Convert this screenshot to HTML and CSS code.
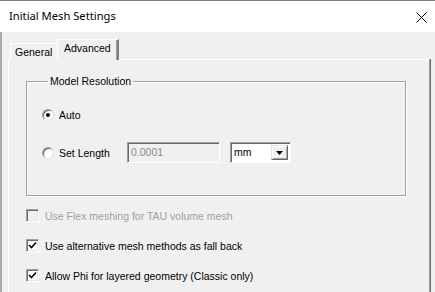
FILE: index.html
```html
<!DOCTYPE html>
<html>
<head>
<meta charset="utf-8">
<link rel="stylesheet" href="styles.css">
</head>
<body>
<div class="window">
  <div class="titlebar">
    <span class="title">Initial Mesh Settings</span>
    <svg class="close" width="11" height="11" viewBox="0 0 11 11"><path d="M0.5 0.5 L10.5 10.5 M10.5 0.5 L0.5 10.5" stroke="#000" stroke-width="1" fill="none"/></svg>
  </div>
  <div class="client">
    <div class="tabs">
      <div class="tab">General</div>
      <div class="tab active">Advanced</div>
    </div>
    <div class="panel">
      <fieldset class="group">
        <legend>Model Resolution</legend>
        <div class="row row-auto">
          <span class="radio checked"></span>
          <span class="label">Auto</span>
        </div>
        <div class="row row-len">
          <span class="radio"></span>
          <span class="label lenlabel">Set Length</span>
          <span class="field">0.0001</span>
          <span class="combo"><span class="combo-text">mm</span><span class="combo-btn"><svg width="7" height="4" viewBox="0 0 7 4"><path d="M0 0 H7 L3.5 4 Z" fill="#000"/></svg></span></span>
        </div>
      </fieldset>
      <div class="checks">
        <div class="check-row disabled"><span class="box"></span><span class="label">Use Flex meshing for TAU volume mesh</span></div>
        <div class="check-row"><span class="box"><svg width="9" height="9" viewBox="0 0 9 9"><path d="M1 4 L3.5 6.5 L8 1.5" stroke="#000" stroke-width="1.6" fill="none"/></svg></span><span class="label">Use alternative mesh methods as fall back</span></div>
        <div class="check-row"><span class="box"><svg width="9" height="9" viewBox="0 0 9 9"><path d="M1 4 L3.5 6.5 L8 1.5" stroke="#000" stroke-width="1.6" fill="none"/></svg></span><span class="label">Allow Phi for layered geometry (Classic only)</span></div>
      </div>
    </div>
  </div>
</div>
</body>
</html>
```
FILE: styles.css
```css
* { box-sizing: border-box; }
html, body { margin: 0; padding: 0; }
body {
  width: 435px;
  height: 292px;
  overflow: hidden;
  background: #f0f0f0;
  font-family: "Liberation Sans", Arial, sans-serif;
  font-size: 10.5px;
  color: #000;
}
.window { width: 435px; height: 292px; display: flex; flex-direction: column; }
.titlebar {
  height: 32px;
  flex: none;
  background: #fff;
  border-top: 1px solid #7a7a7a;
  display: flex;
  align-items: center;
  padding-left: 9px;
  padding-right: 8px;
}
.title {
  font-family: "Noto Sans", "Liberation Sans", sans-serif;
  font-size: 11.2px;
  color: #000;
  flex: 1;
  margin-top: -2px;
}
.close { margin-top: 1px; margin-right: 0; }
.client {
  flex: 1;
  border-left: 2px solid #a8a8a8;
  padding: 7px 4px 0 6px;
  display: flex;
  flex-direction: column;
}
.tabs {
  display: flex;
  align-items: flex-end;
  padding-left: 2px;
  position: relative;
  z-index: 1;
  margin-bottom: -1px;
}
.tab {
  height: 17px;
  padding: 0 4px;
  width: 47px;
  line-height: 15px;
  padding-top: 1px;
  border-top: 1px solid #fff;
  border-left: 1px solid #fff;
  background: #f0f0f0;
}
.tab.active {
  height: 21px;
  width: 62px;
  padding-left: 6px;
  line-height: 14px;
  border-right: 2px solid;
  border-right-color: #808080;
  box-shadow: inset -1px 0 0 #a0a0a0;
}
.panel {
  flex: 1;
  border-top: 1px solid #fff;
  border-left: 1px solid #fff;
  border-right: 1px solid #a0a0a0;
  box-shadow: 1px 0 0 #696969;
  padding: 0 0 0 17px;
  margin-right: 0;
  width: 422px;
}
.group {
  margin: 15px 0 0 0;
  width: 380px;
  height: 121px;
  border: 1px solid #a0a0a0;
  box-shadow: 1px 1px 0 #fff, inset 1px 1px 0 #fff;
  padding: 0 0 0 15px;
}
.group legend {
  padding: 0 2px;
  margin-left: 6px;
  line-height: 13px;
}
.row { display: flex; align-items: center; }
.row-auto { margin-top: 20px; height: 14px; }
.row-len { margin-top: 20px; height: 21px; }
.label { margin-left: 5px; }
.lenlabel { width: 68px; }
.radio {
  width: 12px;
  height: 12px;
  flex: none;
  border-radius: 50%;
  background: #fff;
  border: 1px solid;
  border-color: #a0a0a0 #e3e3e3 #e3e3e3 #a0a0a0;
  box-shadow: inset 1px 1px 0 #696969;
  display: flex;
  align-items: center;
  justify-content: center;
}
.radio.checked::after {
  content: "";
  width: 4px;
  height: 4px;
  border-radius: 50%;
  background: #000;
}
.field {
  width: 93px;
  height: 21px;
  border: 1px solid;
  border-color: #a0a0a0 #fff #fff #a0a0a0;
  box-shadow: inset 1px 1px 0 #696969;
  background: #f0f0f0;
  color: #8a8a8a;
  padding: 2px 0 0 3px;
  line-height: 14px;
}
.combo {
  margin-left: 10px;
  width: 61px;
  height: 21px;
  border: 1px solid;
  border-color: #a0a0a0 #fff #fff #a0a0a0;
  box-shadow: inset 1px 1px 0 #696969;
  background: #fff;
  display: flex;
  align-items: stretch;
  padding: 2px 2px 2px 2px;
}
.combo-text { flex: 1; padding-left: 1px; line-height: 15px; color: #000; }
.combo-btn {
  width: 17px;
  background: #f0f0f0;
  border: 1px solid;
  border-color: #e3e3e3 #696969 #696969 #e3e3e3;
  box-shadow: inset 1px 1px 0 #fff, inset -1px -1px 0 #a0a0a0;
  display: flex;
  align-items: center;
  justify-content: center;
}
.checks { display: flex; flex-direction: column; gap: 17px; margin-top: 13px; padding-left: 0; }
.check-row { display: flex; align-items: center; height: 13px; }
.box {
  width: 13px;
  height: 13px;
  flex: none;
  background: #fff;
  border: 1px solid;
  border-color: #a0a0a0 #fff #fff #a0a0a0;
  box-shadow: inset 1px 1px 0 #696969, inset -1px -1px 0 #e3e3e3;
  display: flex;
  align-items: center;
  justify-content: center;
}
.check-row .label { margin-left: 6px; }
.check-row.disabled .box { background: #f0f0f0; }
.check-row.disabled .label { color: #a0a0a0; }
```
